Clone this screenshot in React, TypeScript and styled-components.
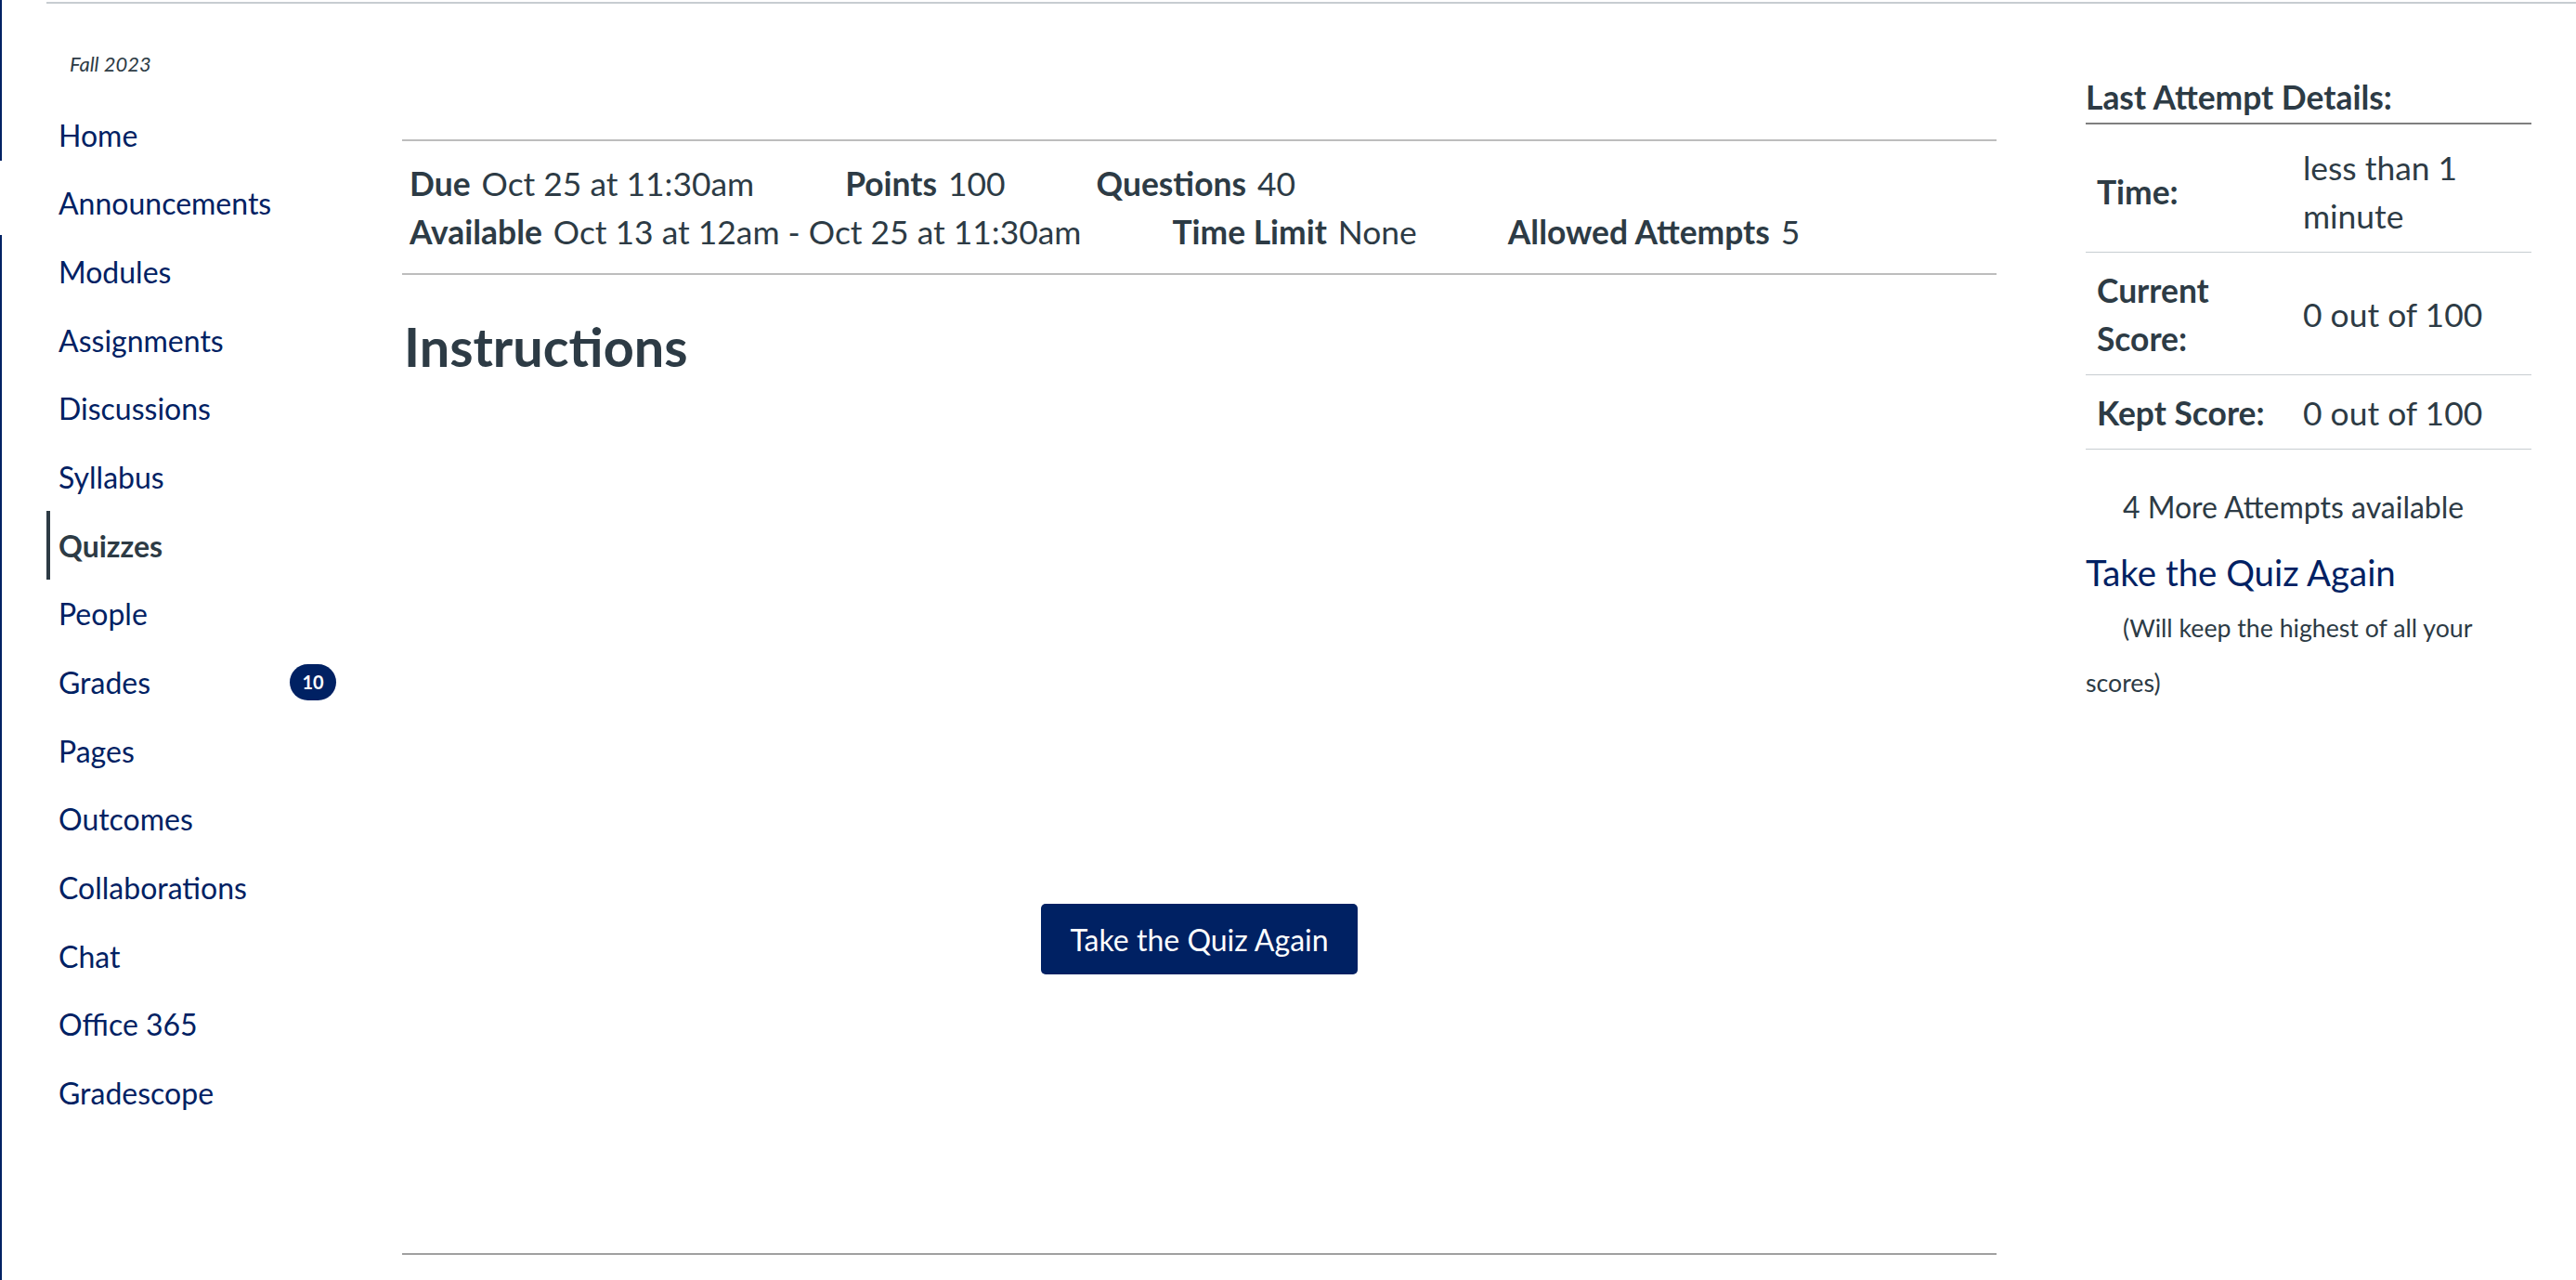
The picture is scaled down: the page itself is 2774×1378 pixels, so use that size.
import React from "react";
import styled, { createGlobalStyle } from "styled-components";

const NAVY = "#002163";
const TEXT = "#2d3b45";

const GlobalStyle = createGlobalStyle`
  html, body { margin: 0; padding: 0; background: #fff; }
  body { font-family: Lato, "Noto Sans", sans-serif; color: ${TEXT}; }
  * { box-sizing: border-box; }
`;

const Page = styled.div`
  display: flex;
  width: 2774px;
  min-height: 1378px;
`;

const Rail = styled.div`
  width: 2px;
  flex-shrink: 0;
  display: flex;
  flex-direction: column;
`;

const RailSegment = styled.div<{ $h?: number; $on: boolean }>`
  background: ${(p) => (p.$on ? NAVY : "transparent")};
  height: ${(p) => (p.$h ? `${p.$h}px` : "auto")};
  flex: ${(p) => (p.$h ? "0 0 auto" : "1 1 auto")};
`;

const Body = styled.div`
  flex: 1;
  padding-left: 48px;
`;

const TopLine = styled.div`
  margin-top: 2px;
  border-top: 2px solid #c7cdd1;
`;

const Columns = styled.div`
  display: flex;
  align-items: flex-start;
`;

const Nav = styled.nav`
  width: 333px;
  flex-shrink: 0;
`;

const Term = styled.div`
  margin-top: 52px;
  padding-left: 25px;
  font-size: 22px;
  font-style: italic;
  line-height: 26.4px;
`;

const NavList = styled.div`
  margin-top: 26px;
  display: flex;
  flex-direction: column;
`;

const NavItem = styled.a<{ $active?: boolean }>`
  display: flex;
  align-items: center;
  justify-content: space-between;
  height: 73.67px;
  border-left: 4px solid ${(p) => (p.$active ? TEXT : "transparent")};
  padding-left: 9px;
  padding-right: 21px;
  font-size: 32px;
  color: ${(p) => (p.$active ? TEXT : NAVY)};
  font-weight: ${(p) => (p.$active ? 700 : 400)};
  text-decoration: none;
`;

const Badge = styled.span`
  width: 50px;
  height: 39px;
  border-radius: 20px;
  background: ${NAVY};
  color: #fff;
  font-size: 20px;
  font-weight: 700;
  display: flex;
  align-items: center;
  justify-content: center;
`;

const Main = styled.main`
  flex: 1;
  margin-left: 50px;
  padding-top: 146px;
`;

const Meta = styled.div`
  border-top: 2px solid #bdbdbd;
  border-bottom: 2px solid #bdbdbd;
  padding: 20px 0 18px 8px;
  display: flex;
  flex-wrap: wrap;
  column-gap: 98px;
  font-size: 35.4px;
  line-height: 52px;
`;

const MetaItem = styled.div`
  display: flex;
  gap: 12px;
  white-space: nowrap;
`;

const MetaLabel = styled.span`
  font-weight: 700;
`;

const Heading = styled.h2`
  margin: 42px 0 0 2px;
  font-size: 57.6px;
  line-height: 1.2;
  font-weight: 700;
`;

const ButtonRow = styled.div`
  display: flex;
  justify-content: center;
  margin-top: 566px;
`;

const PrimaryButton = styled.button`
  height: 76px;
  padding: 0 31px;
  border: none;
  border-radius: 5px;
  background: ${NAVY};
  color: #fff;
  font-family: Lato, "Noto Sans", sans-serif;
  font-size: 32px;
  cursor: pointer;
`;

const BottomRule = styled.div`
  margin-top: 300px;
  border-top: 2px solid #a0a0a0;
`;

const Sidebar = styled.aside`
  width: 480px;
  flex-shrink: 0;
  margin-left: 96px;
  margin-right: 48px;
  padding-top: 82px;
`;

const SideHeading = styled.h3`
  margin: 0;
  font-size: 35.4px;
  font-weight: 700;
  line-height: 38.4px;
  padding-bottom: 8px;
  border-bottom: 2px solid #7f7f7f;
`;

const Table = styled.table`
  margin-top: 6px;
  width: 480px;
  table-layout: fixed;
  border-collapse: collapse;
  font-size: 35.4px;
  line-height: 52px;
`;

const Row = styled.tr`
  border-bottom: 1px solid #c7cdd1;
`;

const Cell = styled.td<{ $label?: boolean }>`
  padding: 15px 12px 12px 12px;
  vertical-align: middle;
  font-weight: ${(p) => (p.$label ? 700 : 400)};
`;

const Attempts = styled.div`
  margin-top: 36px;
  font-size: 32px;
  line-height: 52px;
  text-indent: 40px;
`;

const AgainLink = styled.a`
  display: block;
  margin-top: 18px;
  font-size: 38.4px;
  line-height: 52px;
  color: ${NAVY};
  text-decoration: none;
`;

const Note = styled.div`
  margin-top: 5px;
  font-size: 26.7px;
  line-height: 59px;
  text-indent: 40px;
`;

const navItems = [
  "Home",
  "Announcements",
  "Modules",
  "Assignments",
  "Discussions",
  "Syllabus",
  "Quizzes",
  "People",
  "Grades",
  "Pages",
  "Outcomes",
  "Collaborations",
  "Chat",
  "Office 365",
  "Gradescope",
];

const meta: [string, string][] = [
  ["Due", "Oct 25 at 11:30am"],
  ["Points", "100"],
  ["Questions", "40"],
  ["Available", "Oct 13 at 12am - Oct 25 at 11:30am"],
  ["Time Limit", "None"],
  ["Allowed Attempts", "5"],
];

export default function App() {
  return (
    <>
      <GlobalStyle />
      <Page>
        <Rail>
          <RailSegment $on $h={173} />
          <RailSegment $on={false} $h={80} />
          <RailSegment $on />
        </Rail>
        <Body>
          <TopLine />
          <Columns>
            <Nav>
              <Term>Fall 2023</Term>
              <NavList>
                {navItems.map((n) => (
                  <NavItem key={n} href="#" $active={n === "Quizzes"}>
                    <span>{n}</span>
                    {n === "Grades" && <Badge>10</Badge>}
                  </NavItem>
                ))}
              </NavList>
            </Nav>
            <Main>
              <Meta>
                {meta.map(([l, v]) => (
                  <MetaItem key={l}>
                    <MetaLabel>{l}</MetaLabel>
                    <span>{v}</span>
                  </MetaItem>
                ))}
              </Meta>
              <Heading>Instructions</Heading>
              <ButtonRow>
                <PrimaryButton>Take the Quiz Again</PrimaryButton>
              </ButtonRow>
              <BottomRule />
            </Main>
            <Sidebar>
              <SideHeading>Last Attempt Details:</SideHeading>
              <Table>
                <colgroup>
                  <col style={{ width: 222 }} />
                  <col style={{ width: 258 }} />
                </colgroup>
                <tbody>
                  <Row>
                    <Cell $label>Time:</Cell>
                    <Cell>less than 1 minute</Cell>
                  </Row>
                  <Row>
                    <Cell $label>Current Score:</Cell>
                    <Cell>0 out of 100</Cell>
                  </Row>
                  <Row>
                    <Cell $label>Kept Score:</Cell>
                    <Cell>0 out of 100</Cell>
                  </Row>
                </tbody>
              </Table>
              <Attempts>4 More Attempts available</Attempts>
              <AgainLink href="#">Take the Quiz Again</AgainLink>
              <Note>(Will keep the highest of all your scores)</Note>
            </Sidebar>
          </Columns>
        </Body>
      </Page>
    </>
  );
}
